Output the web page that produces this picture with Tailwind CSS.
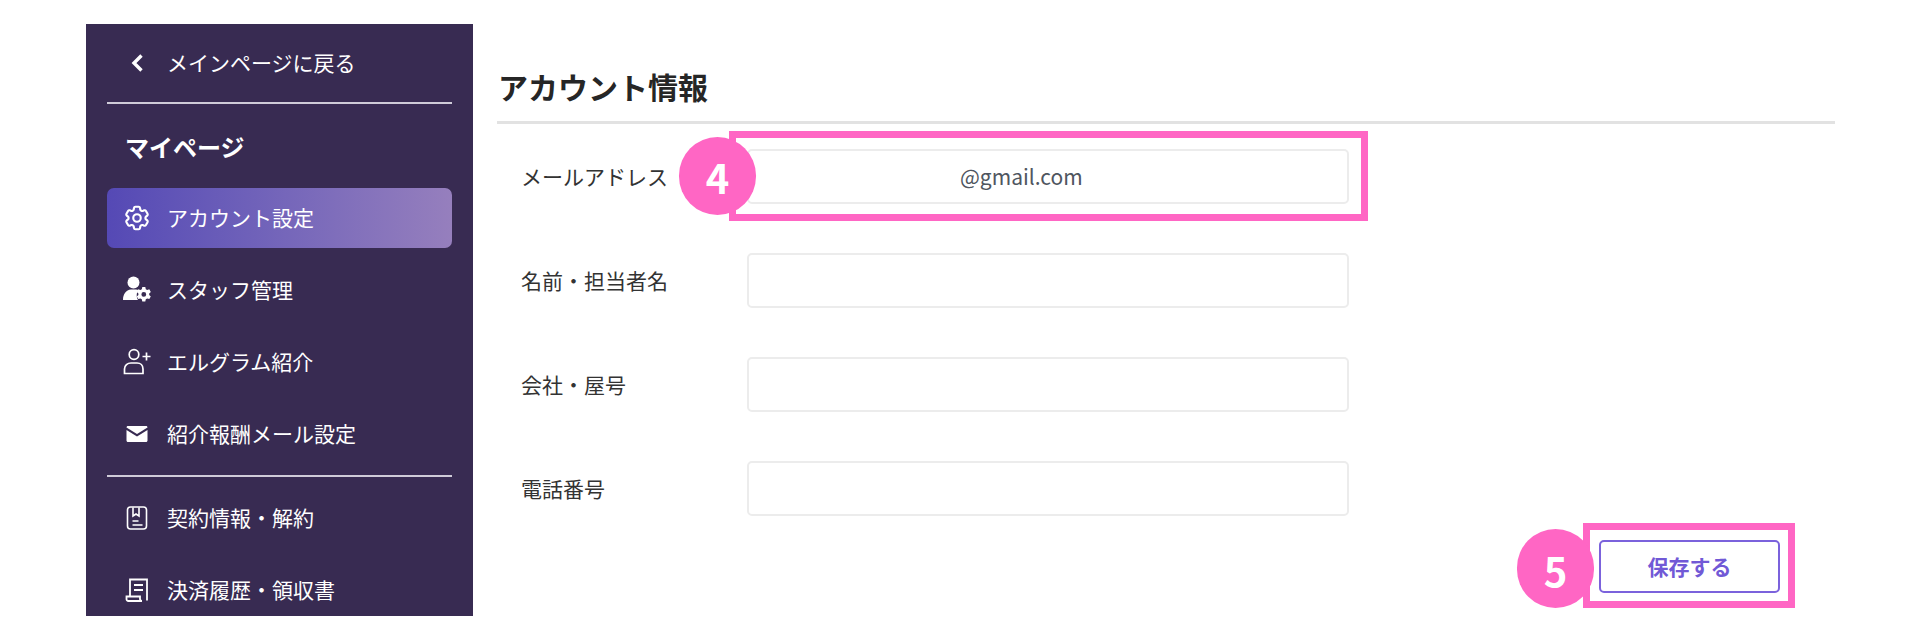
<!DOCTYPE html>
<html lang="ja">
<head>
    <meta charset="UTF-8">
    <title>アカウント情報</title>
    <script src="https://cdn.jsdelivr.net/npm/@tailwindcss/browser@4"></script>
</head>
<body class="bg-white font-['Noto_Sans_CJK_JP',sans-serif]">
    <div class="relative w-[1920px] h-[640px] overflow-hidden flex items-start pl-[86px] pt-[24px]">
        <!-- Sidebar -->
        <aside class="w-[387px] h-[592px] overflow-hidden shrink-0 bg-[#382b52] px-[21px] text-white text-[21px]">
            <a class="h-[78px] flex items-center gap-[15px] px-[15px]">
                <svg class="w-[30px] h-[30px] shrink-0" viewBox="0 0 30 30" fill="none" stroke="currentColor" stroke-width="3.4"><path d="M19.500 7.500 12 15l7.500 7.500"/></svg>
                <span>メインページに戻る</span>
            </a>
            <div class="h-[2px] bg-[#cfcbd8]"></div>
            <h2 class="h-[84px] flex items-center pl-[18px] pt-[1px] text-[24px] font-bold">マイページ</h2>
            <div class="flex flex-col gap-[12px]">
                <a class="h-[60px] flex items-center gap-[15px] px-[15px] rounded-[7px] bg-linear-to-r from-[#5549b5] to-[#967fbd]">
                    <svg class="w-[30px] h-[30px] shrink-0" viewBox="0 0 24 24" fill="none" stroke="currentColor" stroke-width="1.7"><path d="M9.594 3.94c.09-.542.56-.94 1.11-.94h2.593c.55 0 1.02.398 1.11.94l.213 1.281c.063.374.313.686.645.87.074.04.147.083.22.127.325.196.72.257 1.075.124l1.217-.456a1.125 1.125 0 0 1 1.37.49l1.296 2.247a1.125 1.125 0 0 1-.26 1.431l-1.003.827c-.293.241-.438.613-.43.992a7.723 7.723 0 0 1 0 .255c-.008.378.137.75.43.991l1.004.827c.424.35.534.955.26 1.43l-1.298 2.247a1.125 1.125 0 0 1-1.369.491l-1.217-.456c-.355-.133-.75-.072-1.076.124a6.47 6.47 0 0 1-.22.128c-.331.183-.581.495-.644.869l-.213 1.281c-.09.543-.56.94-1.11.94h-2.594c-.55 0-1.019-.398-1.11-.94l-.213-1.281c-.062-.374-.312-.686-.644-.87a6.52 6.52 0 0 1-.22-.127c-.325-.196-.72-.257-1.076-.124l-1.217.456a1.125 1.125 0 0 1-1.369-.49l-1.297-2.247a1.125 1.125 0 0 1 .26-1.431l1.004-.827c.292-.24.437-.613.43-.991a6.932 6.932 0 0 1 0-.255c.007-.38-.138-.751-.43-.992l-1.004-.827a1.125 1.125 0 0 1-.26-1.43l1.297-2.247a1.125 1.125 0 0 1 1.37-.491l1.216.456c.356.133.751.072 1.076-.124.072-.044.146-.086.22-.128.332-.183.582-.495.644-.869l.214-1.28Z"/><path d="M15 12a3 3 0 1 1-6 0 3 3 0 0 1 6 0Z"/></svg>
                    <span>アカウント設定</span>
                </a>
                <a class="h-[60px] flex items-center gap-[15px] px-[15px]">
                    <svg class="w-[30px] h-[30px] shrink-0" viewBox="0 0 30 30" fill="currentColor"><circle cx="11.500" cy="7.500" r="6"/><path d="M1 25c0-6 3-10 8-10.500h5c1 0 2 .2 2.500.5-2 2.500-2.500 6.500-.5 10z"/><path fill-rule="evenodd" d="M20.300 12h3l.5 2.200 1.400.8 2.100-.7 1.500 2.600-1.600 1.500v1.600l1.600 1.500-1.500 2.600-2.100-.7-1.400.8-.5 2.200h-3l-.5-2.200-1.400-.8-2.100.7-1.500-2.600 1.600-1.500v-1.600l-1.600-1.500 1.500-2.600 2.100.7 1.400-.8zm1.500 5a2.400 2.400 0 1 0 0 4.800 2.400 2.400 0 0 0 0-4.800z"/></svg>
                    <span>スタッフ管理</span>
                </a>
                <a class="h-[60px] flex items-center gap-[15px] px-[15px]">
                    <svg class="w-[30px] h-[30px] shrink-0" viewBox="0 0 30 30" fill="none" stroke="currentColor" stroke-width="1.7"><circle cx="12" cy="7.500" r="4.800"/><path d="M2.500 26.500v-4.500c0-3.500 3-6 6.500-6h6c3.500 0 6 2.500 6 6v4.500z"/><path d="M20.500 9.500h8M24.500 5.500v8"/></svg>
                    <span>エルグラム紹介</span>
                </a>
                <a class="h-[60px] flex items-center gap-[15px] px-[15px]">
                    <svg class="w-[30px] h-[30px] shrink-0" viewBox="0 0 30 30" fill="currentColor"><path d="M6 7h18c1 0 1.500.6 1.500 1.500L15 15 4.500 8.500C4.500 7.600 5 7 6 7z"/><path d="M4.500 11 15 17.500 25.500 11v10.500c0 .9-.6 1.500-1.500 1.500H6c-.9 0-1.500-.6-1.500-1.500z"/></svg>
                    <span>紹介報酬メール設定</span>
                </a>
            </div>
            <div class="h-[2px] bg-[#cfcbd8] mt-[11px] mb-[11px]"></div>
            <div class="flex flex-col gap-[12px]">
                <a class="h-[60px] flex items-center gap-[15px] px-[15px]">
                    <svg class="w-[30px] h-[30px] shrink-0" viewBox="0 0 30 30" fill="none" stroke="currentColor" stroke-width="1.6"><rect x="5.500" y="4" width="19" height="22" rx="3"/><path d="M11 4.500v8.500l3-2 3 2V4.500"/><path d="M10.500 18h6M10.500 22h10"/></svg>
                    <span>契約情報・解約</span>
                </a>
                <a class="h-[60px] flex items-center gap-[15px] px-[15px]">
                    <svg class="w-[30px] h-[30px] shrink-0" viewBox="0 0 30 30" fill="none" stroke="currentColor" stroke-width="1.8"><path d="M8 21.500V4.500h17V25.500"/><path d="M12 10h9M12 15h9" stroke-width="2"/><path d="M4.500 21.500h13.500v2.500c0 1 1 2 2 2H6c-1 0-1.500-1-1.500-2z"/></svg>
                    <span>決済履歴・領収書</span>
                </a>
            </div>
        </aside>

        <!-- Main -->
        <main class="w-[1338px] ml-[24px] text-[#333333] text-[21px]">
            <h1 class="h-[100px] flex items-end pb-[12px] pl-[1px] text-[30px] leading-[45px] font-bold text-[#262626] border-b-[3px] border-[#e2e2e2]">アカウント情報</h1>
            <div class="flex flex-col gap-[49px] mt-[25px]">
                <div class="flex items-center h-[55px] pl-[24px]">
                    <label class="w-[226px] shrink-0 pt-[1px]">メールアドレス</label>
                    <div class="w-[602px] h-[55px] flex items-center pl-[211px] rounded-[5px] border-2 border-[#ececec] text-[#4f5660]">@gmail.com</div>
                </div>
                <div class="flex items-center h-[55px] pl-[24px]">
                    <label class="w-[226px] shrink-0 pt-[1px]">名前・担当者名</label>
                    <input class="w-[602px] h-[55px] rounded-[5px] border-2 border-[#ececec]">
                </div>
                <div class="flex items-center h-[55px] pl-[24px]">
                    <label class="w-[226px] shrink-0 pt-[1px]">会社・屋号</label>
                    <input class="w-[602px] h-[55px] rounded-[5px] border-2 border-[#ececec]">
                </div>
                <div class="flex items-center h-[55px] pl-[24px]">
                    <label class="w-[226px] shrink-0 pt-[1px]">電話番号</label>
                    <input class="w-[602px] h-[55px] rounded-[5px] border-2 border-[#ececec]">
                </div>
            </div>
            <div class="flex justify-end mt-[24px] pr-[55px]">
                <button class="w-[181px] h-[53px] rounded-[5px] border-2 border-[#7b62dc] text-[#7159d6] font-bold">保存する</button>
            </div>
        </main>

        <!-- Annotations -->
        <div class="absolute left-[729px] top-[131px] w-[639px] h-[90px] border-[7px] border-[#ff66c4]"></div>
        <div class="absolute left-[679px] top-[137px] w-[77px] h-[78px] rounded-full bg-[#ff66c4] flex items-center justify-center pt-[2px] text-white text-[40px] font-bold">4</div>
        <div class="absolute left-[1583px] top-[523px] w-[212px] h-[85px] border-[7px] border-[#ff66c4]"></div>
        <div class="absolute left-[1517px] top-[529px] w-[77px] h-[79px] rounded-full bg-[#ff66c4] flex items-center justify-center pt-[2px] text-white text-[40px] font-bold">5</div>
    </div>
</body>
</html>
